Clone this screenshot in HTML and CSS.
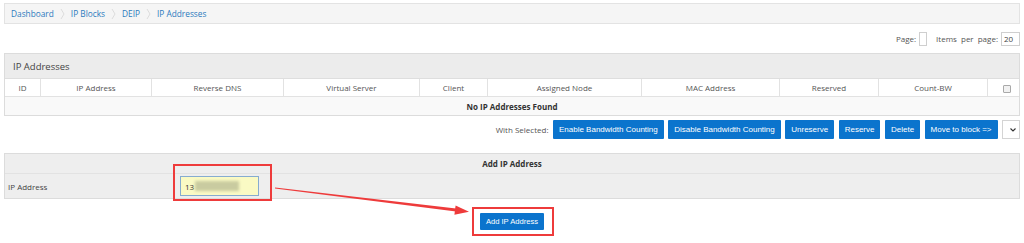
FILE: index.html
```html
<!DOCTYPE html>
<html lang="en">
  <head>
    <meta charset="UTF-8" />
    <meta name="viewport" content="width=device-width, initial-scale=1.0" />
    <title>IP Addresses</title>
    <link rel="stylesheet" href="styles.css">
  </head>
  <body>
    <div class="page">
      <nav class="crumbs">
        <a href="#">Dashboard</a>
        <span class="sep"><svg width="5" height="12" viewBox="0 0 5 12"><polyline points="1,1 4,6 1,11" /></svg></span>
        <a href="#">IP Blocks</a>
        <span class="sep"><svg width="5" height="12" viewBox="0 0 5 12"><polyline points="1,1 4,6 1,11" /></svg></span>
        <a href="#">DEIP</a>
        <span class="sep"><svg width="5" height="12" viewBox="0 0 5 12"><polyline points="1,1 4,6 1,11" /></svg></span>
        <a href="#">IP Addresses</a>
      </nav>

      <div class="pager">
        <span>Page:</span>
        <input class="pager-input page-no" type="text" value="" />
        <span class="per-page">Items per page:</span>
        <input class="pager-input per-page-no" type="text" value="20" />
      </div>

      <section class="panel">
        <div class="panel-title">IP Addresses</div>
        <table class="list">
          <thead>
            <tr>
              <th>ID</th>
              <th>IP Address</th>
              <th>Reverse DNS</th>
              <th>Virtual Server</th>
              <th>Client</th>
              <th>Assigned Node</th>
              <th>MAC Address</th>
              <th>Reserved</th>
              <th>Count-BW</th>
              <th><span class="check"></span></th>
            </tr>
          </thead>
          <tbody>
            <tr>
              <td class="empty" colspan="10">No IP Addresses Found</td>
            </tr>
          </tbody>
        </table>
      </section>

      <div class="bulk">
        <span class="bulk-label">With Selected:</span>
        <button class="btn">Enable Bandwidth Counting</button>
        <button class="btn">Disable Bandwidth Counting</button>
        <button class="btn">Unreserve</button>
        <button class="btn">Reserve</button>
        <button class="btn">Delete</button>
        <button class="btn">Move to block =&gt;</button>
        <div class="select-box">
          <svg width="6" height="4" viewBox="0 0 6 4"><polyline points="0.5,0.5 3,3 5.5,0.5" /></svg>
        </div>
      </div>

      <section class="panel add">
        <div class="add-head">Add IP Address</div>
        <div class="add-row">
          <label class="add-label">IP Address</label>
          <div class="ip-input">13<span class="blur"></span></div>
        </div>
      </section>

      <div class="submit">
        <button class="btn btn-add">Add IP Address</button>
      </div>
    </div>

    <!-- screenshot annotations -->
    <svg class="annot" width="1024" height="243" viewBox="0 0 1024 243">
      <rect x="174" y="165" width="97" height="35" />
      <rect x="473" y="208" width="80" height="27" />
      <polygon class="arrow" points="275,187.4 275,188.6 456,211.6 456,208.6" />
      <polygon class="arrow" points="455.6,205.4 469,211.8 454.4,214.8" />
    </svg>
  </body>
</html>
```

FILE: styles.css
```css
body {
  margin: 0;
  font-family: "Open Sans", sans-serif;
  font-size: 8px;
  color: #555;
  background-color: #fff;
}
.page {
  padding: 3px 4px 0;
}
.crumbs {
  display: flex;
  align-items: center;
  height: 19px;
  padding-left: 6px;
  background-color: #f5f5f5;
  border: 1px solid #e3e3e3;
}
.crumbs a {
  color: #2b7abd;
  text-decoration: none;
  font-size: 8.3px;
}
.sep {
  display: flex;
  margin: 0 6px;
}
.sep polyline {
  fill: none;
  stroke: #d6d6d6;
  stroke-width: 0.8;
}
.pager {
  display: flex;
  justify-content: flex-end;
  align-items: center;
  height: 29px;
  color: #555;
}
.pager-input {
  box-sizing: border-box;
  height: 14px;
  border: 1px solid #cfcfcf;
  padding: 0 2px;
  font-family: "Open Sans", sans-serif;
  font-size: 8px;
  color: #444;
}
.page-no {
  width: 8px;
  margin-left: 3px;
}
.per-page {
  margin-left: 9px;
  word-spacing: 2px;
}
.per-page-no {
  width: 19px;
  margin-left: 3px;
}
.panel {
  border: 1px solid #dcdcdc;
}
.panel-title {
  height: 24px;
  display: flex;
  align-items: center;
  padding-left: 8px;
  font-size: 9.5px;
  color: #444;
  background-color: #ececec;
  border-bottom: 1px solid #dedede;
}
.list {
  width: 100%;
  border-collapse: collapse;
  table-layout: fixed;
}
.list th {
  height: 17px;
  padding: 0;
  font-weight: normal;
  color: #555;
  background-color: #fff;
  border: 1px solid #e2e2e2;
  border-top: none;
}
.list th:first-child {
  border-left: none;
}
.list th:last-child {
  border-right: none;
}
.list th:nth-child(1) { width: 35px; }
.list th:nth-child(2) { width: 110px; }
.list th:nth-child(3) { width: 131px; }
.list th:nth-child(4) { width: 135px; }
.list th:nth-child(5) { width: 67px; }
.list th:nth-child(6) { width: 153px; }
.list th:nth-child(7) { width: 137px; }
.list th:nth-child(8) { width: 98px; }
.list th:nth-child(9) { width: 108px; }
.check {
  display: inline-block;
  box-sizing: border-box;
  width: 8px;
  height: 8px;
  margin-left: 7px;
  vertical-align: middle;
  border: 1px solid #a9a9a9;
  border-radius: 1px;
  background-color: #f1f1f1;
}
.list .empty {
  height: 18px;
  padding: 0;
  text-align: center;
  font-weight: 700;
  color: #333;
  background-color: #f9f9f9;
}
.bulk {
  display: flex;
  justify-content: flex-end;
  align-items: flex-start;
  gap: 4.5px;
  height: 33px;
  padding-top: 4px;
}
.bulk-label {
  line-height: 19px;
}
.btn {
  height: 19px;
  padding: 0 6px;
  border: none;
  border-radius: 1px;
  background-color: #0b74cd;
  color: white;
  font-family: "Liberation Sans", Arial, sans-serif;
  font-size: 8px;
  cursor: pointer;
}
.select-box {
  box-sizing: border-box;
  width: 18px;
  height: 19px;
  display: flex;
  justify-content: flex-end;
  align-items: center;
  padding-right: 3px;
  border: 1px solid #d4d4d4;
  background-color: #fff;
}
.select-box polyline {
  fill: none;
  stroke: #333;
  stroke-width: 1.1;
}
.add-head {
  height: 19px;
  display: flex;
  justify-content: center;
  align-items: center;
  font-weight: 700;
  color: #333;
  background-color: #eeeeee;
  border-bottom: 1px solid #e2e2e2;
}
.add-row {
  height: 24px;
  display: flex;
  align-items: center;
  background-color: #eeeeee;
}
.add-label {
  width: 172px;
  padding-left: 3px;
  color: #444;
}
.ip-input {
  box-sizing: border-box;
  width: 79px;
  height: 20px;
  display: flex;
  align-items: center;
  padding-left: 4px;
  border: 1px solid #86acd0;
  background-color: #fafac4;
  color: #333;
}
.blur {
  display: inline-block;
  width: 44px;
  height: 10px;
  margin-left: 1px;
  background-color: #c9cba0;
  filter: blur(1.5px);
}
.submit {
  display: flex;
  justify-content: center;
  padding-top: 14px;
}
.btn-add {
  height: 17px;
  font-size: 7.6px;
}
.annot {
  position: absolute;
  top: 0;
  left: 0;
  pointer-events: none;
}
.annot rect {
  fill: none;
  stroke: #ee3b3b;
  stroke-width: 2;
}
.annot .arrow {
  fill: #ee3b3b;
  stroke: none;
}
```
